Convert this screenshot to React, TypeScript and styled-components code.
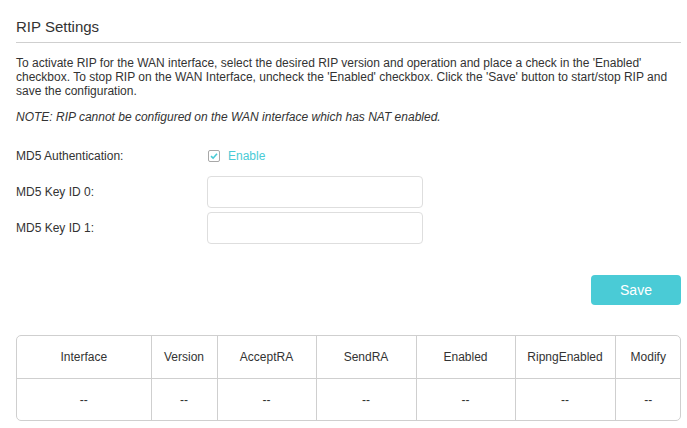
import React from "react";
import styled, { createGlobalStyle } from "styled-components";

const Global = createGlobalStyle`
  html, body { margin: 0; padding: 0; background: #fff; }
  body { font-family: "Liberation Sans", Arial, sans-serif; color: #333; }
`;

const Page = styled.div`
  padding: 17px 6px 0 16px;
  display: flex;
  flex-direction: column;
`;

const Title = styled.h2`
  margin: 0;
  font-size: 15px;
  line-height: 20px;
  font-weight: normal;
  color: #333;
  padding-bottom: 5px;
  border-bottom: 1px solid #cfcfcf;
`;

const Para = styled.p<{ $italic?: boolean; $top: number }>`
  margin: ${(p) => p.$top}px 0 0;
  font-size: 12px;
  line-height: 14px;
  font-style: ${(p) => (p.$italic ? "italic" : "normal")};
  color: #333;
`;

const Form = styled.div`
  margin-top: 16px;
  display: flex;
  flex-direction: column;
  gap: 4px;
`;

const Row = styled.div`
  display: grid;
  grid-template-columns: 191px 216px;
  align-items: center;
  height: 32px;
`;

const Label = styled.span`
  font-size: 12px;
  color: #333;
`;

const CheckWrap = styled.label`
  display: flex;
  align-items: center;
  gap: 8px;
  padding-left: 1px;
  font-size: 12px;
  color: #4acbd6;
  cursor: pointer;
`;

const Box = styled.span`
  width: 10px;
  height: 10px;
  border: 1px solid #a8a8a8;
  border-radius: 2px;
  display: flex;
  align-items: center;
  justify-content: center;
`;

const Input = styled.input`
  box-sizing: border-box;
  width: 216px;
  height: 32px;
  border: 1px solid #dedede;
  border-radius: 4px;
  outline: none;
  padding: 0 8px;
  font-family: inherit;
  font-size: 12px;
`;

const Actions = styled.div`
  display: flex;
  justify-content: flex-end;
  margin-top: 31px;
`;

const SaveButton = styled.button`
  width: 90px;
  height: 30px;
  border: none;
  border-radius: 4px;
  background: #4acbd6;
  color: #fff;
  font-family: inherit;
  font-size: 14px;
  cursor: pointer;
`;

const TableWrap = styled.div`
  margin-top: 30px;
  border: 1px solid #cfcfcf;
  border-radius: 5px;
  overflow: hidden;
`;

const Table = styled.table`
  width: 100%;
  border-collapse: collapse;
  table-layout: fixed;
`;

const Cell = styled.td<{ $head?: boolean }>`
  height: ${(p) => (p.$head ? 42 : 41)}px;
  padding: 0;
  text-align: center;
  font-size: 12px;
  font-weight: normal;
  color: #333;
  border-left: 1px solid #cfcfcf;
  border-top: ${(p) => (p.$head ? "none" : "1px solid #cfcfcf")};
  &:first-child { border-left: none; }
`;

const columns = [
  { name: "Interface", w: 134 },
  { name: "Version", w: 66 },
  { name: "AcceptRA", w: 99 },
  { name: "SendRA", w: 100 },
  { name: "Enabled", w: 99 },
  { name: "RipngEnabled", w: 100 },
  { name: "Modify", w: 66 },
];

export default function App() {
  return (
    <>
      <Global />
      <Page>
        <Title>RIP Settings</Title>
        <Para $top={13}>
          To activate RIP for the WAN interface, select the desired RIP version and operation and place a check in the 'Enabled'
          checkbox. To stop RIP on the WAN Interface, uncheck the 'Enabled' checkbox. Click the 'Save' button to start/stop RIP and
          save the configuration.
        </Para>
        <Para $italic $top={12}>
          NOTE: RIP cannot be configured on the WAN interface which has NAT enabled.
        </Para>
        <Form>
          <Row>
            <Label>MD5 Authentication:</Label>
            <CheckWrap>
              <Box>
                <svg width="8" height="8" viewBox="0 0 8 8">
                  <path d="M1 4.2 L3.1 6.2 L7 1.8" fill="none" stroke="#4acbd6" strokeWidth="1.6" />
                </svg>
              </Box>
              Enable
            </CheckWrap>
          </Row>
          <Row>
            <Label>MD5 Key ID 0:</Label>
            <Input type="text" />
          </Row>
          <Row>
            <Label>MD5 Key ID 1:</Label>
            <Input type="text" />
          </Row>
        </Form>
        <Actions>
          <SaveButton>Save</SaveButton>
        </Actions>
        <TableWrap>
          <Table>
            <colgroup>
              {columns.map((c) => (
                <col key={c.name} style={{ width: c.w }} />
              ))}
            </colgroup>
            <thead>
              <tr>
                {columns.map((c) => (
                  <Cell as="th" $head key={c.name}>
                    {c.name}
                  </Cell>
                ))}
              </tr>
            </thead>
            <tbody>
              <tr>
                {columns.map((c) => (
                  <Cell key={c.name}>--</Cell>
                ))}
              </tr>
            </tbody>
          </Table>
        </TableWrap>
      </Page>
    </>
  );
}
